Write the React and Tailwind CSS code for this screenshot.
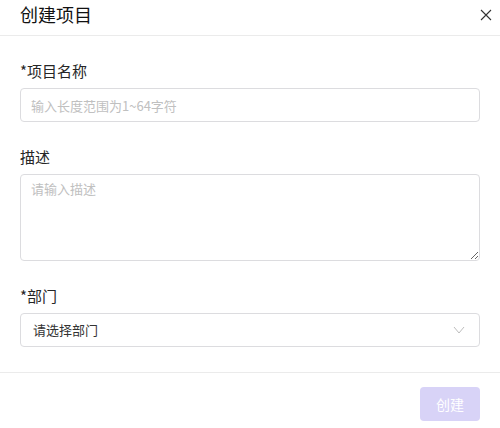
import React from 'react'

const font = { fontFamily: '"Noto Sans CJK SC", "Noto Sans", sans-serif' }

const Label = ({ required, children }) => (
  <div className="h-[22px] mb-[6px] text-[15px] leading-[22px] text-[#262626]">
    {required && <span>*</span>}
    {children}
  </div>
)

export default function App() {
  return (
    <div
      className="w-[500px] h-[428px] bg-white flex flex-col font-['Noto_Sans_CJK_SC','Noto_Sans',sans-serif]"
      style={font}
    >
      <div className="h-[36px] border-b border-[#ebebeb] flex items-start justify-between pl-[20px] pr-[4px]">
        <h1 className="text-[18px] leading-[28px] text-[#111] font-normal">创建项目</h1>
        <button className="w-[20px] h-[20px] mt-[5px] flex items-center justify-center text-[#333]">
          <svg width="12" height="12" viewBox="0 0 12 12" fill="none" stroke="currentColor" strokeWidth="1.1">
            <path d="M1 1 L11 11 M11 1 L1 11" />
          </svg>
        </button>
      </div>

      <div className="px-[20px] pt-[24px] pb-[25px] border-b border-[#ebebeb]">
        <Label required>项目名称</Label>
        <input
          className="w-full h-[34px] rounded-[4px] border border-[#dcdcdf] px-[10px] text-[13px] outline-none placeholder:text-[#c0c0c0]"
          placeholder="输入长度范围为1~64字符"
        />

        <div className="mt-[24px]">
          <Label>描述</Label>
          <textarea
            className="block w-full h-[87px] rounded-[4px] border border-[#dcdcdf] px-[10px] py-[4px] text-[13px] leading-[20px] outline-none resize-y placeholder:text-[#c0c0c0]"
            placeholder="请输入描述"
          />
        </div>

        <div className="mt-[24px]">
          <Label required>部门</Label>
          <div className="w-full h-[34px] rounded-[4px] border border-[#dcdcdf] pl-[12px] pr-[14px] flex items-center justify-between">
            <span className="text-[13px] text-[#333]">请选择部门</span>
            <svg width="12" height="8" viewBox="0 0 12 8" fill="none" stroke="#bdbdbd" strokeWidth="1">
              <path d="M1 1 L6 7 L11 1" />
            </svg>
          </div>
        </div>
      </div>

      <div className="flex justify-end px-[20px] pt-[14px]">
        <button className="w-[60px] h-[34px] rounded-[4px] bg-[#d8d3f7] text-white text-[14px]">创建</button>
      </div>
    </div>
  )
}
